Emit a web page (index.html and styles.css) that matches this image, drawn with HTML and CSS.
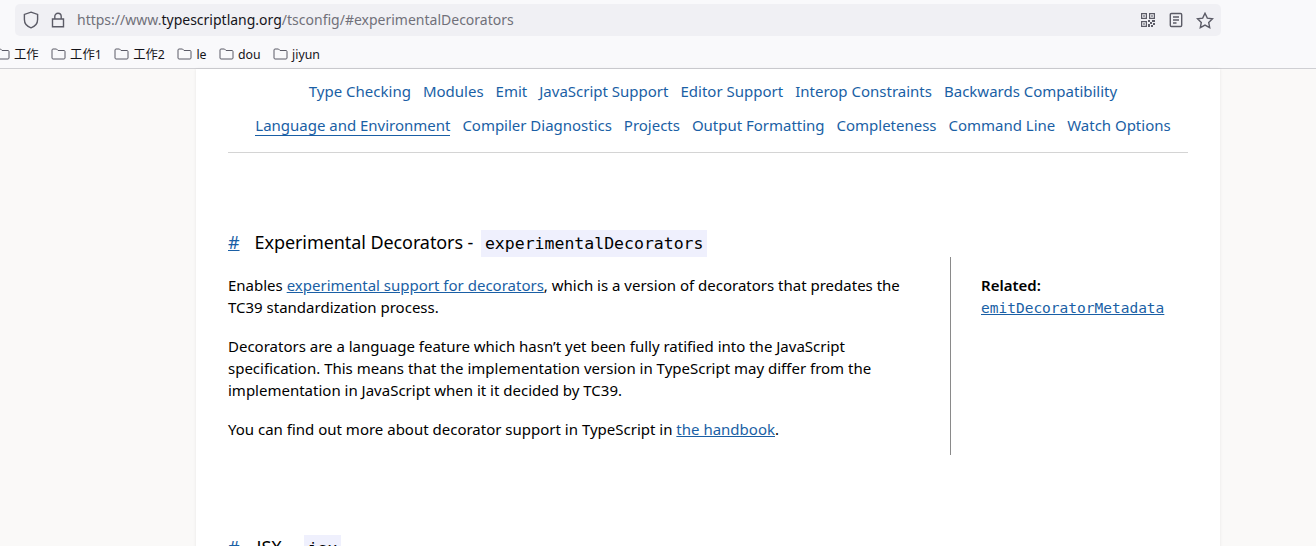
FILE: index.html
```html
<!DOCTYPE html>
<html>
<head>
    <title>TSConfig Reference</title>
    <link rel="stylesheet" href="styles.css">
</head>
<body>
    <header class="browser">
        <div class="addressRow">
            <div class="addressBar">
                <svg class="barIcon shield" width="16" height="18" viewBox="0 0 16 18"><path d="M8 1.2 14.6 3.4V8.6C14.6 12.6 11.8 15.6 8 16.8 4.2 15.6 1.4 12.6 1.4 8.6V3.4Z"/></svg>
                <svg class="barIcon lock" width="14" height="16" viewBox="0 0 14 16"><path d="M3.8 7V4.4C3.8 2.6 5.2 1.2 7 1.2S10.200 2.600 10.200 4.400V7M1.500 7H12.500V14.800H1.500Z"/></svg>
                <span class="url">https://www.<b>typescriptlang.org</b>/tsconfig/#experimentalDecorators</span>
                <div class="barActions">
                    <svg width="14" height="14" viewBox="0 0 14 14" class="qr"><path fill-rule="evenodd" d="M0 0h6v6H0zM1.200 1.200v3.600h3.600V1.200zM8 0h6v6H8zM9.200 1.200v3.600h3.600V1.200zM0 8h6v6H0zM1.200 9.200v3.600h3.600V9.200zM2.300 2.300h1.400v1.400H2.300zM10.300 2.300h1.400v1.400h-1.400zM2.300 10.300h1.400v1.400H2.300zM7 7h2v2H7zM11 7h3v2h-3zM9 9h2v2H9zM7 11h2v3H7zM12 10h2v2h-2zM10 12h2v2h-2z"/></svg>
                    <svg class="barIcon" width="14" height="16" viewBox="0 0 14 16"><path d="M2.500 1.500H11.500A1.200 1.200 0 0 1 12.700 2.700V13.300A1.200 1.200 0 0 1 11.500 14.500H2.500A1.200 1.200 0 0 1 1.300 13.300V2.700A1.200 1.200 0 0 1 2.500 1.500ZM4 5H10M4 8H10M4 11H7.500"/></svg>
                    <svg class="barIcon" width="18" height="17" viewBox="0 0 18 17"><path d="M9 1.300 11.300 6.100 16.500 6.800 12.700 10.400 13.700 15.600 9 13.100 4.300 15.600 5.300 10.400 1.500 6.800 6.700 6.100Z"/></svg>
                </div>
            </div>
        </div>
        <nav class="bookmarks">
            <span class="bookmark"><svg class="folder" width="15" height="12" viewBox="0 0 15 12"><path d="M1 2C1 1.400 1.400 1 2 1H5.500L7 2.500H13C13.600 2.500 14 2.900 14 3.500V10C14 10.600 13.600 11 13 11H2C1.400 11 1 10.600 1 10Z"/></svg>工作</span>
            <span class="bookmark"><svg class="folder" width="15" height="12" viewBox="0 0 15 12"><path d="M1 2C1 1.400 1.400 1 2 1H5.500L7 2.500H13C13.600 2.500 14 2.900 14 3.500V10C14 10.600 13.600 11 13 11H2C1.400 11 1 10.600 1 10Z"/></svg>工作1</span>
            <span class="bookmark"><svg class="folder" width="15" height="12" viewBox="0 0 15 12"><path d="M1 2C1 1.400 1.400 1 2 1H5.500L7 2.500H13C13.600 2.500 14 2.900 14 3.500V10C14 10.600 13.600 11 13 11H2C1.400 11 1 10.600 1 10Z"/></svg>工作2</span>
            <span class="bookmark"><svg class="folder" width="15" height="12" viewBox="0 0 15 12"><path d="M1 2C1 1.400 1.400 1 2 1H5.500L7 2.500H13C13.600 2.500 14 2.900 14 3.500V10C14 10.600 13.600 11 13 11H2C1.400 11 1 10.600 1 10Z"/></svg>le</span>
            <span class="bookmark"><svg class="folder" width="15" height="12" viewBox="0 0 15 12"><path d="M1 2C1 1.400 1.400 1 2 1H5.500L7 2.500H13C13.600 2.500 14 2.900 14 3.500V10C14 10.600 13.600 11 13 11H2C1.400 11 1 10.600 1 10Z"/></svg>dou</span>
            <span class="bookmark"><svg class="folder" width="15" height="12" viewBox="0 0 15 12"><path d="M1 2C1 1.400 1.400 1 2 1H5.500L7 2.500H13C13.600 2.500 14 2.900 14 3.500V10C14 10.600 13.600 11 13 11H2C1.400 11 1 10.600 1 10Z"/></svg>jiyun</span>
        </nav>
    </header>

    <div class="pageFrame">
        <main class="card">
            <section class="categories">
                <div class="categoryRow">
                    <a href="#">Type Checking</a>
                    <a href="#">Modules</a>
                    <a href="#">Emit</a>
                    <a href="#">JavaScript Support</a>
                    <a href="#">Editor Support</a>
                    <a href="#">Interop Constraints</a>
                    <a href="#">Backwards Compatibility</a>
                </div>
                <div class="categoryRow tightRow">
                    <a href="#" class="active">Language and Environment</a>
                    <a href="#">Compiler Diagnostics</a>
                    <a href="#">Projects</a>
                    <a href="#">Output Formatting</a>
                    <a href="#">Completeness</a>
                    <a href="#">Command Line</a>
                    <a href="#">Watch Options</a>
                </div>
            </section>

            <section class="option">
                <h3><a href="#" class="anchor">#</a>Experimental Decorators - <code>experimentalDecorators</code></h3>
                <div class="optionBody">
                    <div class="description">
                        <p>Enables <a href="#">experimental support for decorators</a>, which is a version of decorators that predates the TC39 standardization process.</p>
                        <p>Decorators are a language feature which hasn’t yet been fully ratified into the JavaScript specification. This means that the implementation version in TypeScript may differ from the implementation in JavaScript when it it decided by TC39.</p>
                        <p>You can find out more about decorator support in TypeScript in <a href="#">the handbook</a>.</p>
                    </div>
                    <aside class="related">
                        <strong>Related:</strong>
                        <a href="#" class="relatedLink"><code>emitDecoratorMetadata</code></a>
                    </aside>
                </div>
            </section>

            <section class="option nextOption">
                <h3><a href="#" class="anchor">#</a>JSX - <code>jsx</code></h3>
            </section>
        </main>
    </div>
</body>
</html>
```

FILE: styles.css
```css
html, body {
    margin: 0;
    padding: 0;
    height: 546px;
    overflow: hidden;
}

body {
    background-color: #faf9f8;
    color: #000;
    font-family: "Noto Sans", "Noto Sans CJK SC", sans-serif;
    font-size: 15px;
}

.browser {
    height: 68px;
    background-color: #f9f9fb;
    border-bottom: 1px solid #cfcfd3;
}

.addressRow {
    padding: 4px 0 0 15px;
}

.addressBar {
    width: 1206px;
    height: 32px;
    box-sizing: border-box;
    padding: 0 7px 0 8px;
    display: flex;
    align-items: center;
    background-color: #f0f0f4;
    border-radius: 5px;
}

.barIcon {
    fill: none;
    stroke: #5b5b66;
    stroke-width: 1.4;
}

.shield {
    margin-right: 12px;
}

.lock {
    margin-right: 12px;
}

.url {
    color: #70707a;
    font-size: 14px;
    line-height: 30px;
    padding-bottom: 1px;
}

.url b {
    color: #15141a;
    font-weight: 400;
}

.barActions {
    margin-left: auto;
    display: flex;
    align-items: center;
    gap: 13px;
}

.qr {
    fill: #5b5b66;
    margin-right: 1px;
}

.bookmarks {
    margin-left: -5px;
    padding-top: 4px;
    height: 28px;
    display: flex;
    align-items: center;
    gap: 12.5px;
    font-size: 12.3px;
    color: #15141a;
}

.bookmark {
    display: flex;
    align-items: center;
    gap: 4px;
}

.folder {
    fill: none;
    stroke: #5b5b66;
    stroke-width: 1;
}

.pageFrame {
    padding-left: 196px;
}

.card {
    width: 1024px;
    height: 500px;
    box-sizing: border-box;
    padding: 5px 32px 0;
    background-color: #fff;
    box-shadow: 0 0 3px rgba(0, 0, 0, 0.08);
}

a {
    color: #1a5fa5;
}

.categories {
    padding: 0 0 10px 10px;
    border-bottom: 1px solid #d4d4d4;
}

.categoryRow {
    display: flex;
    justify-content: center;
    gap: 12px;
    height: 34px;
    align-items: center;
}

.tightRow {
    letter-spacing: -0.015px;
}

.categoryRow a {
    text-decoration: none;
}

.categoryRow a.active {
    border-bottom: 1px solid #1a5fa5;
}

.option {
    padding-top: 76px;
}

h3 {
    margin: 0;
    font-size: 18px;
    font-weight: 400;
    line-height: 27px;
    letter-spacing: -0.08px;
}

.anchor {
    margin-right: 15px;
}

code {
    font-family: "DejaVu Sans Mono", monospace;
    letter-spacing: 0;
}

h3 code {
    display: inline-block;
    margin-left: 3px;
    padding: 0 4px;
    background-color: #eff0fd;
    font-size: 16.5px;
}

.nextOption h3 code {
    margin-left: 7px;
}

.nextOption .anchor {
    margin-right: 17px;
}

.optionBody {
    display: flex;
}

.description {
    width: 692px;
    padding-top: 17px;
    line-height: 22px;
}

.description p {
    margin: 0 0 17px;
}

.related {
    margin-left: 30px;
    height: 198px;
    box-sizing: border-box;
    padding: 17px 0 0 30px;
    border-left: 1px solid #8a8a8a;
    display: flex;
    flex-direction: column;
    line-height: 23px;
}

.related strong {
    font-weight: 600;
}

.relatedLink {
    display: block;
    margin-top: -1px;
    line-height: 22px;
}

.related code {
    font-size: 14.5px;
}

.nextOption {
    padding-top: 77px;
}
```
